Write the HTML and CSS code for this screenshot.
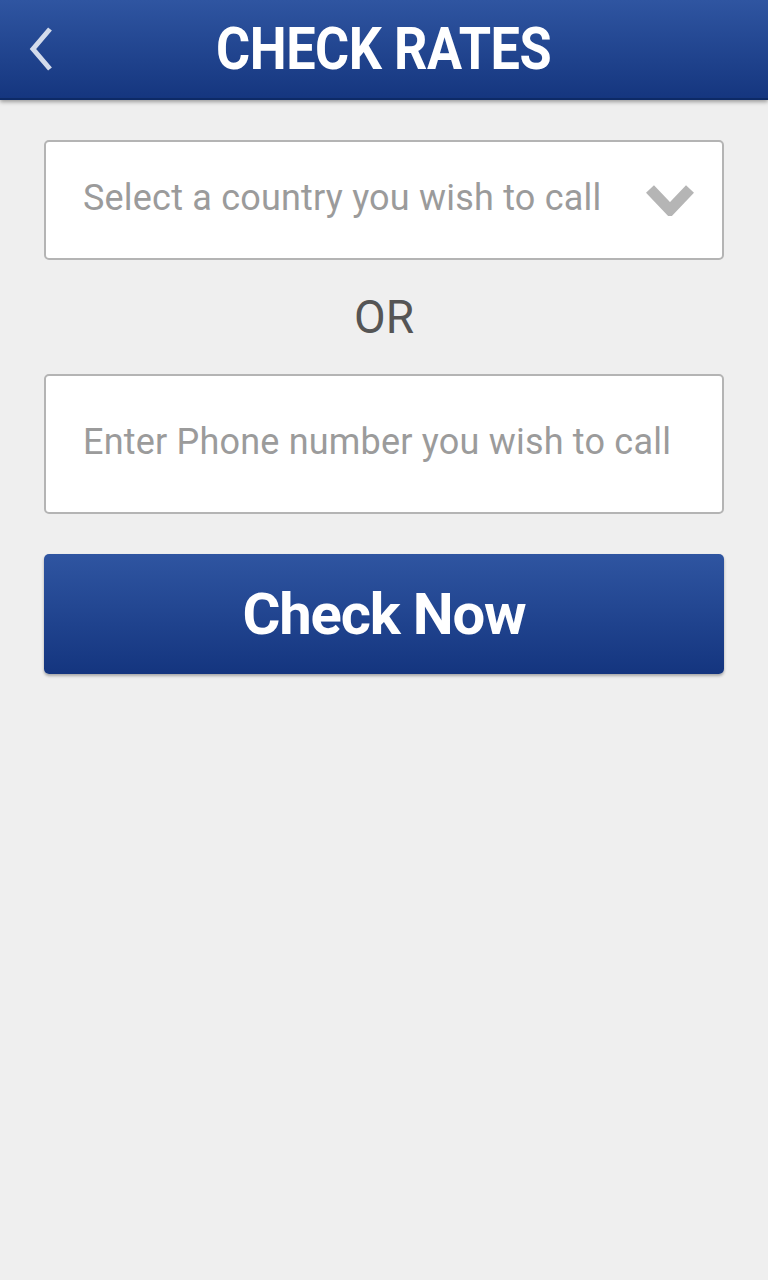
FILE: index.html
```html
<!DOCTYPE html>
<html>
<head>
<meta charset="utf-8">
<link rel="stylesheet" href="styles.css">
</head>
<body>
<header class="topbar">
  <button class="back" aria-label="Back">
    <svg width="24" height="44" viewBox="0 0 24 44"><polyline points="21,2 4,22 21,42" fill="none" stroke="#d3dbeb" stroke-width="5"/></svg>
  </button>
  <h1 class="title">CHECK RATES</h1>
</header>
<main class="content">
  <div class="field select">
    <span class="placeholder">Select a country you wish to call</span>
    <svg class="chev" width="48" height="32" viewBox="0 0 48 32"><polyline points="4,5 24,26 44,5" fill="none" stroke="#b5b5b5" stroke-width="11" stroke-linejoin="miter"/></svg>
  </div>
  <div class="or">OR</div>
  <div class="field phone">
    <span class="placeholder">Enter Phone number you wish to call</span>
  </div>
  <button class="check">Check Now</button>
</main>
</body>
</html>
```
FILE: styles.css
```css
html, body {
  margin: 0;
  padding: 0;
}
body {
  width: 768px;
  height: 1280px;
  background: #efefef;
  font-family: Roboto, "Liberation Sans", sans-serif;
  overflow: hidden;
}
.topbar {
  height: 98px;
  background: linear-gradient(#2f55a1, #15367f);
  border-bottom: 2px solid #0d2a66;
  box-shadow: 0 2px 4px rgba(0,0,0,0.35);
  display: flex;
  align-items: center;
  justify-content: center;
  position: relative;
}
.back {
  position: absolute;
  left: 29px;
  top: 27px;
  background: none;
  border: 0;
  padding: 0;
  display: flex;
}
.title {
  margin: 0;
  color: #fff;
  font-family: Roboto, sans-serif;
  font-weight: 700;
  font-size: 60px;
  letter-spacing: -0.5px;
  transform: scaleX(0.87);
  line-height: 1;
}
.content {
  padding: 40px 44px 0 44px;
  display: flex;
  flex-direction: column;
}
.field {
  background: #fff;
  border: 2px solid #b4b4b4;
  border-radius: 5px;
  box-sizing: border-box;
  display: flex;
  align-items: center;
  padding-left: 37px;
}
.select {
  height: 120px;
  justify-content: space-between;
  padding-right: 28px;
  padding-bottom: 4px;
}
.select .chev {
  margin-top: 4px;
}
.phone {
  height: 140px;
  padding-bottom: 4px;
}
.placeholder {
  color: #9b9b9b;
  font-size: 36px;
  font-weight: 400;
  letter-spacing: 0.2px;
}
.chev {
  display: block;
}
.or {
  text-align: center;
  color: #555;
  font-size: 46px;
  height: 114px;
  line-height: 114px;
}
.check {
  margin-top: 40px;
  height: 120px;
  border: 0;
  border-radius: 5px;
  background: linear-gradient(#2f55a1, #14357f);
  box-shadow: 0 2px 3px rgba(0,0,0,0.3);
  color: #fff;
  font-family: Roboto, sans-serif;
  font-weight: 700;
  font-size: 58px;
  letter-spacing: -1.2px;
  padding: 0;
}
```
